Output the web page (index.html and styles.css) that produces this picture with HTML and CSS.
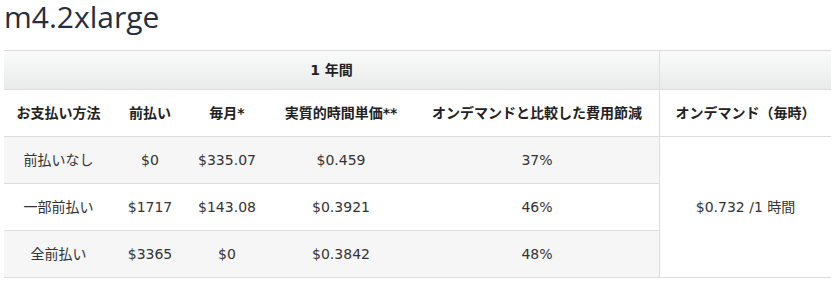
FILE: index.html
```html
<!DOCTYPE html>
<html lang="ja">
<head>
<meta charset="utf-8">
<title>m4.2xlarge</title>
<link rel="stylesheet" href="styles.css">
</head>
<body>
<h1 class="title">m4.2xlarge</h1>
<table class="pricing">
  <colgroup>
    <col class="c1"><col class="c2"><col class="c3"><col class="c4"><col class="c5"><col class="c6">
  </colgroup>
  <thead>
    <tr class="term-row">
      <th colspan="5">1 年間</th>
      <th class="od"></th>
    </tr>
    <tr class="head-row">
      <th>お支払い方法</th>
      <th>前払い</th>
      <th>毎月*</th>
      <th>実質的時間単価**</th>
      <th>オンデマンドと比較した費用節減</th>
      <th class="od">オンデマンド（毎時）</th>
    </tr>
  </thead>
  <tbody>
    <tr class="shade">
      <td>前払いなし</td>
      <td>$0</td>
      <td>$335.07</td>
      <td>$0.459</td>
      <td>37%</td>
      <td class="od" rowspan="3">$0.732 /1 時間</td>
    </tr>
    <tr>
      <td>一部前払い</td>
      <td>$1717</td>
      <td>$143.08</td>
      <td>$0.3921</td>
      <td>46%</td>
    </tr>
    <tr class="shade">
      <td>全前払い</td>
      <td>$3365</td>
      <td>$0</td>
      <td>$0.3842</td>
      <td>48%</td>
    </tr>
  </tbody>
</table>
</body>
</html>
```

FILE: styles.css
```css
html, body {
  margin: 0;
  padding: 0;
  background: #ffffff;
}

body {
  padding: 0 5px 0 4px;
}

.title {
  margin: 0 0 18px 0;
  padding-top: 2px;
  font-family: "Open Sans", "Noto Sans", sans-serif;
  font-weight: 400;
  font-size: 30px;
  line-height: 30px;
  color: #232f3e;
}

.pricing {
  width: 827px;
  table-layout: fixed;
  border-collapse: separate;
  border-spacing: 0;
  font-family: "DejaVu Sans", "Noto Sans CJK JP", sans-serif;
  font-size: 14px;
  color: #333333;
}

.c1 { width: 109px; }
.c2 { width: 74px; }
.c3 { width: 80px; }
.c4 { width: 148px; }
.c5 { width: 244px; }
.c6 { width: 172px; }

.pricing th,
.pricing td {
  box-sizing: border-box;
  padding: 13px 0;
  line-height: 20px;
  text-align: center;
  vertical-align: middle;
  border-bottom: 1px solid #dddddd;
  white-space: nowrap;
}

.pricing th {
  font-weight: 700;
  color: #222222;
}

.term-row th {
  padding: 9px 0;
  border-top: 1px solid #dddddd;
  background: linear-gradient(to bottom, #fafafa 0%, #e9ebeb 100%);
}

.head-row th {
  background: #ffffff;
}

.shade td {
  background: #f6f6f6;
}

.pricing .od {
  border-left: 1px solid #dddddd;
}

.pricing td.od {
  background: #ffffff;
}
```
